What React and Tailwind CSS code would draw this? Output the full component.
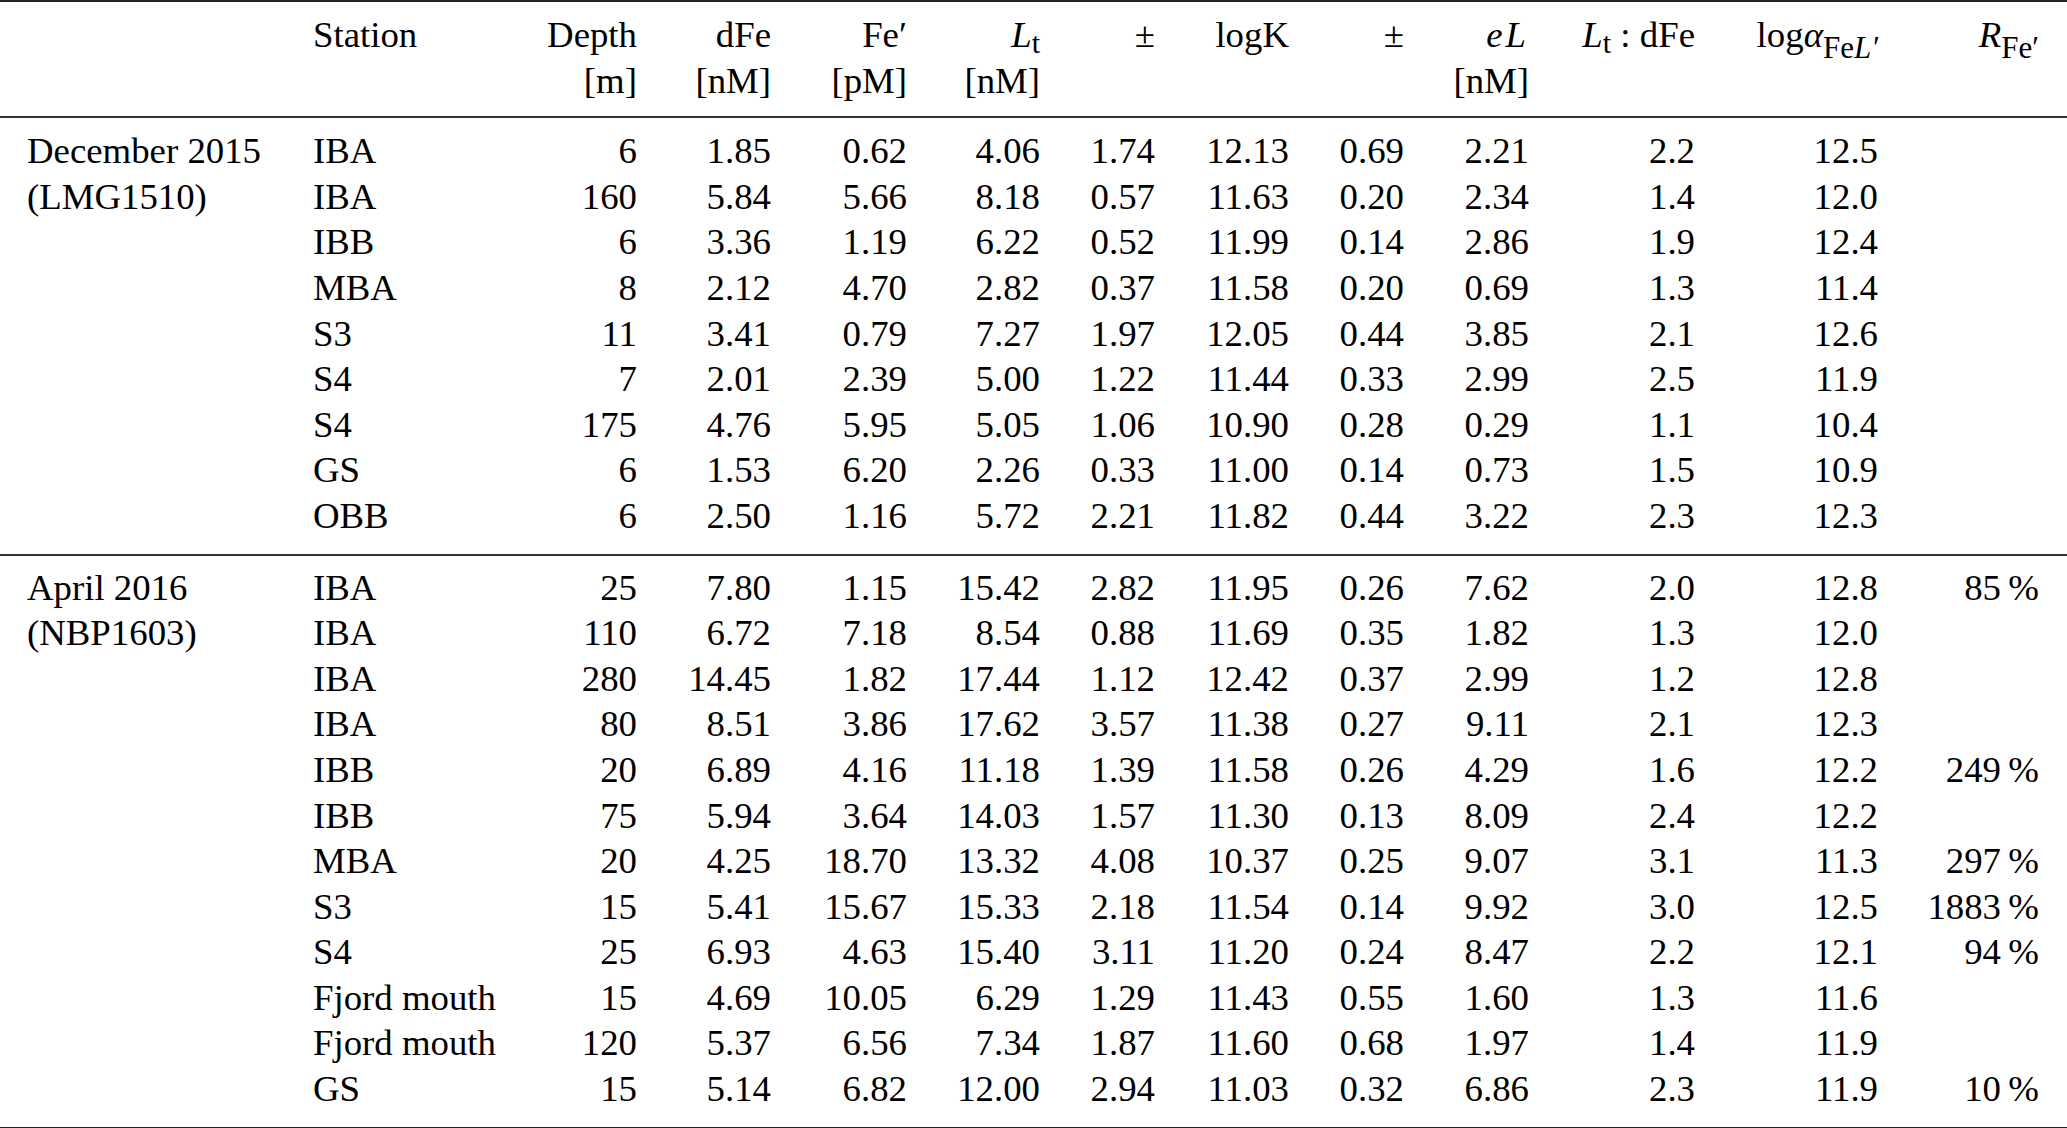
import React from 'react';

// table columns: label, station (left aligned), the rest right aligned
const cols =
  'grid grid-cols-[286px_227px_97px_134px_136px_133px_115px_134px_115px_125px_166px_183px_161px] pl-[27px]';

const dec2015 = [
  ['IBA', '6', '1.85', '0.62', '4.06', '1.74', '12.13', '0.69', '2.21', '2.2', '12.5', ''],
  ['IBA', '160', '5.84', '5.66', '8.18', '0.57', '11.63', '0.20', '2.34', '1.4', '12.0', ''],
  ['IBB', '6', '3.36', '1.19', '6.22', '0.52', '11.99', '0.14', '2.86', '1.9', '12.4', ''],
  ['MBA', '8', '2.12', '4.70', '2.82', '0.37', '11.58', '0.20', '0.69', '1.3', '11.4', ''],
  ['S3', '11', '3.41', '0.79', '7.27', '1.97', '12.05', '0.44', '3.85', '2.1', '12.6', ''],
  ['S4', '7', '2.01', '2.39', '5.00', '1.22', '11.44', '0.33', '2.99', '2.5', '11.9', ''],
  ['S4', '175', '4.76', '5.95', '5.05', '1.06', '10.90', '0.28', '0.29', '1.1', '10.4', ''],
  ['GS', '6', '1.53', '6.20', '2.26', '0.33', '11.00', '0.14', '0.73', '1.5', '10.9', ''],
  ['OBB', '6', '2.50', '1.16', '5.72', '2.21', '11.82', '0.44', '3.22', '2.3', '12.3', ''],
];

const apr2016 = [
  ['IBA', '25', '7.80', '1.15', '15.42', '2.82', '11.95', '0.26', '7.62', '2.0', '12.8', '85\u2009%'],
  ['IBA', '110', '6.72', '7.18', '8.54', '0.88', '11.69', '0.35', '1.82', '1.3', '12.0', ''],
  ['IBA', '280', '14.45', '1.82', '17.44', '1.12', '12.42', '0.37', '2.99', '1.2', '12.8', ''],
  ['IBA', '80', '8.51', '3.86', '17.62', '3.57', '11.38', '0.27', '9.11', '2.1', '12.3', ''],
  ['IBB', '20', '6.89', '4.16', '11.18', '1.39', '11.58', '0.26', '4.29', '1.6', '12.2', '249\u2009%'],
  ['IBB', '75', '5.94', '3.64', '14.03', '1.57', '11.30', '0.13', '8.09', '2.4', '12.2', ''],
  ['MBA', '20', '4.25', '18.70', '13.32', '4.08', '10.37', '0.25', '9.07', '3.1', '11.3', '297\u2009%'],
  ['S3', '15', '5.41', '15.67', '15.33', '2.18', '11.54', '0.14', '9.92', '3.0', '12.5', '1883\u2009%'],
  ['S4', '25', '6.93', '4.63', '15.40', '3.11', '11.20', '0.24', '8.47', '2.2', '12.1', '94\u2009%'],
  ['Fjord mouth', '15', '4.69', '10.05', '6.29', '1.29', '11.43', '0.55', '1.60', '1.3', '11.6', ''],
  ['Fjord mouth', '120', '5.37', '6.56', '7.34', '1.87', '11.60', '0.68', '1.97', '1.4', '11.9', ''],
  ['GS', '15', '5.14', '6.82', '12.00', '2.94', '11.03', '0.32', '6.86', '2.3', '11.9', '10\u2009%'],
];

// subscript: t in L_t sits higher than the Fe subscripts
function SubT({ children }) {
  return <span className="text-[30px] leading-none relative top-[6px]">{children}</span>;
}

function Sub({ children }) {
  return <span className="text-[31px] leading-none relative top-[11px]">{children}</span>;
}

function Row({ label, cells }) {
  return (
    <div className={cols}>
      <div className="whitespace-nowrap">{label}</div>
      <div className="whitespace-nowrap">{cells[0]}</div>
      {cells.slice(1).map((c, i) => (
        <div key={i} className="text-right whitespace-nowrap">
          {c}
        </div>
      ))}
    </div>
  );
}

function Group({ rows, labels, pt }) {
  return (
    <div className={`${pt} pb-[15px]`}>
      {rows.map((r, i) => (
        <Row key={i} label={labels[i] || ''} cells={r} />
      ))}
    </div>
  );
}

function Rule({ color }) {
  return <div className={`h-[2px] w-full ${color}`} />;
}

export default function App() {
  return (
    <div className="w-[2067px] h-[1128px] bg-white text-black text-[36.8px] leading-[45.6px] overflow-hidden font-['Liberation_Serif','Times_New_Roman',serif]">
      <Rule color="bg-[#222]" />
      {/* header */}
      <div className="pt-[10px] pb-[13px]">
        <div className={cols}>
          <div></div>
          <div>Station</div>
          <div className="text-right">Depth</div>
          <div className="text-right">dFe</div>
          <div className="text-right">Fe′</div>
          <div className="text-right whitespace-nowrap">
            <i>L</i>
            <SubT>t</SubT>
          </div>
          <div className="text-right">±</div>
          <div className="text-right">logK</div>
          <div className="text-right">±</div>
          <div className="text-right">
            <i className="tracking-[3px]">eL</i>
          </div>
          <div className="text-right whitespace-nowrap">
            <i>L</i>
            <SubT>t</SubT> : dFe
          </div>
          <div className="text-right whitespace-nowrap">
            log<i>α</i>
            <Sub>
              Fe<i>L′</i>
            </Sub>
          </div>
          <div className="text-right whitespace-nowrap">
            <i>R</i>
            <Sub>Fe′</Sub>
          </div>
        </div>
        <div className={cols}>
          <div></div>
          <div></div>
          <div className="text-right">[m]</div>
          <div className="text-right">[nM]</div>
          <div className="text-right">[pM]</div>
          <div className="text-right">[nM]</div>
          <div></div>
          <div></div>
          <div></div>
          <div className="text-right">[nM]</div>
          <div></div>
          <div></div>
          <div></div>
        </div>
      </div>
      <Rule color="bg-[#333]" />
      <Group rows={dec2015} labels={['December 2015', '(LMG1510)']} pt="pt-[10px]" />
      <Rule color="bg-[#333]" />
      <Group rows={apr2016} labels={['April 2016', '(NBP1603)']} pt="pt-[9px]" />
      <Rule color="bg-[#222]" />
    </div>
  );
}
